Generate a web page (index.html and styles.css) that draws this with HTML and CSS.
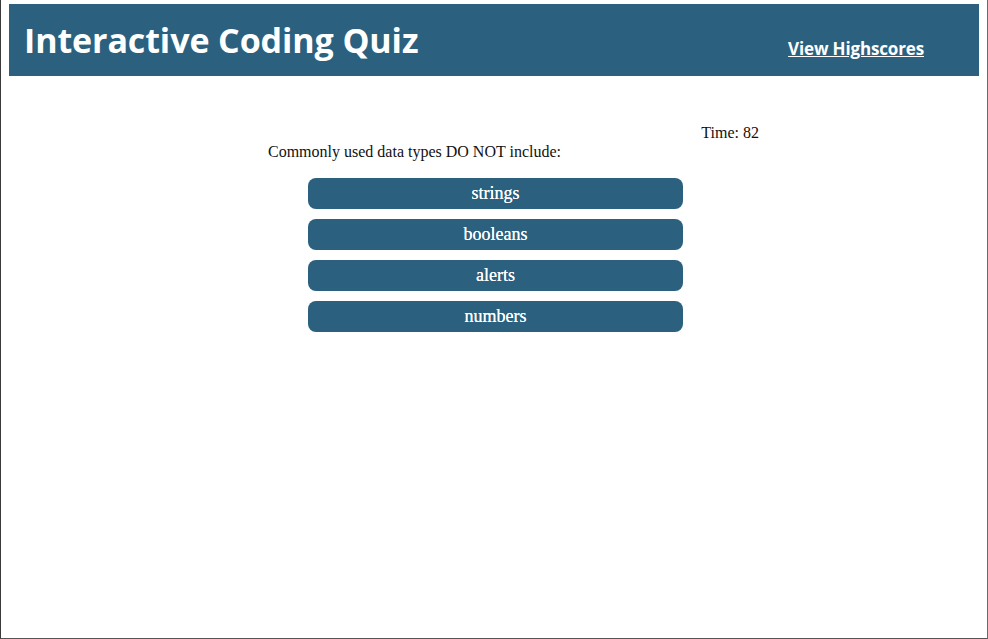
FILE: index.html
```html
<!DOCTYPE html>
<html>
<head>
<meta charset="utf-8">
<title>Interactive Coding Quiz</title>
<link rel="stylesheet" href="styles.css">
</head>
<body>
<header class="site-header">
  <h1 class="title">Interactive Coding Quiz</h1>
  <a class="highscores" href="#">View Highscores</a>
</header>
<main class="quiz">
  <div class="timer">Time: 82</div>
  <p class="question">Commonly used data types DO NOT include:</p>
  <div class="choices">
    <button class="choice">strings</button>
    <button class="choice">booleans</button>
    <button class="choice">alerts</button>
    <button class="choice">numbers</button>
  </div>
</main>
</body>
</html>
```
FILE: styles.css
```css
html {
  height: 100%;
  box-sizing: border-box;
  border-left: 1px solid #3a3a3a;
  border-right: 1px solid #6a6a6a;
  border-bottom: 1px solid #555;
}
body {
  margin: 0 8px;
  padding-top: 4px;
  font-family: "Liberation Serif", "Times New Roman", serif;
  font-size: 16px;
  color: #111;
  background: #fff;
}
.site-header {
  height: 72px;
  background: #2b617e;
  display: flex;
  align-items: flex-start;
  justify-content: space-between;
  padding: 0 55px 0 15px;
}
.title {
  margin: 16px 0 0 0;
  font-family: "Open Sans", "DejaVu Sans", sans-serif;
  font-weight: 700;
  font-size: 34px;
  line-height: 40px;
  color: #fff;
  letter-spacing: -0.1px;
}
.highscores {
  margin-top: 33px;
  font-family: "Open Sans", "Liberation Sans", sans-serif;
  font-weight: 700;
  font-size: 17px;
  line-height: 24px;
  color: #fff;
  text-decoration: underline;
  letter-spacing: -0.15px;
}
.quiz {
  width: 492px;
  margin: 47px 0 0 259px;
}
.timer {
  text-align: right;
  line-height: 19px;
  padding-right: 1px;
}
.question {
  margin: 0;
  line-height: 19px;
}
.choices {
  margin: 17px 0 0 40px;
  width: 375px;
  display: flex;
  flex-direction: column;
  gap: 10px;
}
.choice {
  height: 31px;
  border: none;
  border-radius: 8px;
  background: #2b617e;
  color: #fff;
  font-family: "Liberation Serif", "Times New Roman", serif;
  font-size: 18px;
  font-weight: 400;
  text-shadow: 0 0 0.4px #fff;
  padding: 0;
  cursor: pointer;
}
```
